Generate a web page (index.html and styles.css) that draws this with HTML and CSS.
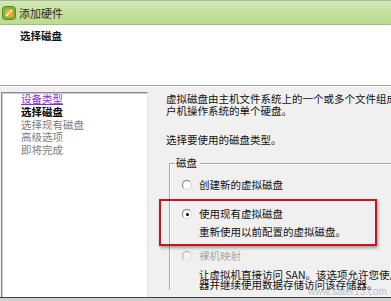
FILE: index.html
```html
<!DOCTYPE html>
<html>
<head>
<meta charset="utf-8">
<link rel="stylesheet" href="styles.css">
</head>
<body>
<div class="window">
  <div class="titlebar">
    <svg class="appicon" width="14" height="14" viewBox="0 0 14 14">
      <rect x="0.5" y="0.5" width="13" height="13" rx="3" fill="#7fb33a" stroke="#4f8a1e"/>
      <rect x="3" y="3" width="8" height="8" rx="1.5" fill="#f2a531"/>
      <path d="M4.5 9.5 L9.5 4.5" stroke="#fff6d8" stroke-width="1.6" stroke-linecap="round"/>
    </svg>
    <span class="title">添加硬件</span>
  </div>
  <div class="header">
    <div class="header-title">选择磁盘</div>
  </div>
  <div class="main">
    <div class="nav">
      <div class="nav-item link">设备类型</div>
      <div class="nav-item current">选择磁盘</div>
      <div class="nav-item">选择现有磁盘</div>
      <div class="nav-item">高级选项</div>
      <div class="nav-item">即将完成</div>
    </div>
    <div class="content">
      <p class="desc">虚拟磁盘由主机文件系统上的一个或多个文件组成<br>户机操作系统的单个硬盘。</p>
      <p class="prompt">选择要使用的磁盘类型。</p>
      <fieldset class="group">
        <legend>磁盘</legend>
        <div class="option opt-new">
          <span class="radio"></span>
          <span class="label">创建新的虚拟磁盘</span>
        </div>
        <div class="option opt-existing">
          <span class="radio checked"></span>
          <div class="opt-text">
            <span class="label">使用现有虚拟磁盘</span>
            <span class="sub">重新使用以前配置的虚拟磁盘。</span>
          </div>
        </div>
        <div class="option opt-raw">
          <span class="radio disabled"></span>
          <div class="opt-text">
            <span class="label disabled-text">裸机映射</span>
            <span class="sub">让虚拟机直接访问 SAN。该选项允许您使用<br>器并继续使用数据存储访问该存储器。</span>
          </div>
        </div>
      </fieldset>
    </div>
  </div>
  <div class="highlight"></div>
  <div class="watermark">www.sater13.com</div>
  <div class="bottom"></div>
</div>
</body>
</html>
```
FILE: styles.css
```css
html, body {
  margin: 0;
  padding: 0;
}
body {
  width: 391px;
  height: 301px;
  overflow: hidden;
  background: #f0f0f0;
  font-family: "Noto Sans CJK SC", "Noto Sans", sans-serif;
  font-size: 10.5px;
  color: #111;
}
.window {
  position: relative;
  width: 391px;
  height: 301px;
  overflow: hidden;
  display: flex;
  flex-direction: column;
}
.titlebar {
  height: 23px;
  flex: none;
  display: flex;
  align-items: center;
  padding-left: 2px;
  border-top: 1px solid #a9b99a;
  border-bottom: 1px solid #9fbd80;
  background: linear-gradient(#d2e8b6, #c4e09e 50%, #bcdb92);
}
.appicon {
  flex: none;
}
.title {
  margin-left: 3px;
  font-size: 11px;
  color: #2a2a2a;
  line-height: 14px;
}
.header {
  height: 61px;
  flex: none;
  background: #ffffff;
  padding: 4px 0 0 20px;
  box-sizing: border-box;
  border-bottom: 1px solid #a0a0a0;
}
.header-title {
  font-weight: bold;
  font-size: 10.5px;
  line-height: 14px;
}
.main {
  flex: 1;
  display: flex;
  border-top: 1px solid #ffffff;
  padding-top: 5px;
}
.nav {
  flex: none;
  width: 126px;
  height: 210px;
  margin-left: 1px;
  padding: 0 0 0 19px;
  background: #fff;
  border: 1px solid;
  border-color: #8c8c8c #e6e6e6 #e6e6e6 #8c8c8c;
  box-shadow: inset 1px 1px 0 #c8c8c8;
}
.nav-item {
  line-height: 12.8px;
  color: #7c7c7c;
}
.nav-item.link {
  color: #8a2be2;
  text-decoration: underline;
}
.nav-item.current {
  color: #000;
  font-weight: bold;
}
.content {
  flex: 1;
  margin-left: 18px;
  white-space: nowrap;
}
.desc {
  margin: 1px 0 0;
  line-height: 12px;
}
.prompt {
  margin: 17px 0 0;
  line-height: 12px;
}
.group {
  margin: 11px 0 0 3px;
  padding: 0 0 0 0;
  border: none;
  border-top: 1px solid #a8a8a8;
  border-left: 1px solid #a8a8a8;
  box-shadow: inset 1px 1px 0 #fff;
  min-width: 0;
}
.group legend {
  margin-left: 5px;
  padding: 0 3px 0 1px;
  line-height: 12px;
}
.option {
  display: flex;
  align-items: flex-start;
  margin-left: 12px;
}
.opt-new {
  margin-top: 10px;
}
.opt-existing {
  margin-top: 17px;
}
.opt-raw {
  margin-top: 13px;
}
.radio {
  flex: none;
  box-sizing: border-box;
  width: 10px;
  height: 10px;
  margin-top: 1px;
  border-radius: 50%;
  border: 1px solid;
  border-color: #7a7a7a #d6d6d6 #d6d6d6 #7a7a7a;
  background: #fff;
  display: flex;
  align-items: center;
  justify-content: center;
}
.radio.checked::after {
  content: "";
  width: 3px;
  height: 3px;
  border-radius: 50%;
  background: #000;
}
.radio.disabled {
  border-color: #a8a8a8 #e0e0e0 #e0e0e0 #a8a8a8;
  background: #f4f4f4;
}
.label {
  margin-left: 7px;
  line-height: 12px;
}
.opt-text {
  display: flex;
  flex-direction: column;
  margin-left: 7px;
}
.opt-text .label {
  margin-left: 0;
}
.sub {
  margin-top: 6px;
  line-height: 11px;
}
.opt-raw .sub {
  margin-top: 8px;
  line-height: 10px;
}
.disabled-text {
  color: #a8a8a8;
}
.highlight {
  position: absolute;
  left: 159px;
  top: 199px;
  width: 214px;
  height: 43px;
  border: 2px solid #c8141c;
  box-shadow: 1px 2px 3px rgba(0,0,0,0.35);
}
.watermark {
  position: absolute;
  left: 308px;
  top: 286px;
  font-family: "Liberation Sans", sans-serif;
  font-size: 10px;
  color: rgba(120,120,120,0.45);
}
.bottom {
  position: absolute;
  left: 0;
  right: 0;
  bottom: 0;
  height: 3px;
  border-top: 1px solid #404040;
  background: #d0d0d0;
}
```
